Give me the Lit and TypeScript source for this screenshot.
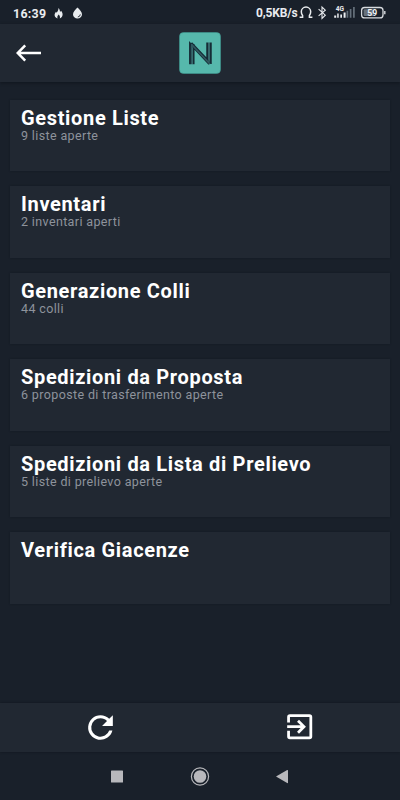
import { LitElement, html, css, svg, nothing } from "lit";
import { customElement, property } from "lit/decorators.js";

@customElement("status-bar")
class StatusBar extends LitElement {
  static styles = css`
    :host { display: flex; justify-content: space-between; height: 24px; padding: 1px 13px 0 13px; box-sizing: border-box; color: #e9ecef; font-size: 12px; font-weight: 700; }
    .side { display: flex; align-items: center; height: 24px; }
    .time { width: 41px; font-size: 12.4px; letter-spacing: 0.3px; white-space: nowrap; }
    .speed { width: 43px; font-size: 12px; letter-spacing: -0.15px; white-space: nowrap; }
    .side svg { display: block; }
    .flame { margin-right: 9px; }
    .label { font-family: Roboto, sans-serif; font-weight: 700; }
  `;
  render() {
    return html`
      <div class="side">
        <span class="time">16:39</span>
        <svg class="flame" width="9" height="12" viewBox="0 0 9 12"><path fill="#e9ecef" d="M4.6 1C5.6 2.5 6 3.8 6 5L7.1 3.8C8.4 5.5 9 7 8.4 8.8C7.9 10.3 6.8 11 5.8 11.4C6.4 9.8 5.6 8.7 4.6 7.6C3.6 8.8 3 9.9 3.5 11.4C1.6 10.8.5 9.6.6 7.8C.7 6.5 1.3 5.6 2 4.7L2.8 5.8C3.5 4.5 4.4 3 4.6 1Z"/></svg>
        <svg width="11" height="12" viewBox="0 0 11 12"><path fill="#e9ecef" d="M5.5.5C7.4 2.5 10 5 10 7.2A4.5 4.4 0 0 1 1 7.2C1 5 3.6 2.5 5.5.5Z"/><path d="M5.8 10Q8.2 9.6 8.3 7.4" fill="none" stroke="#18202a" stroke-width=".9"/></svg>
      </div>
      <div class="side">
        <span class="speed">0,5KB/s</span>
        <svg width="88" height="24" viewBox="300 1 88 24">
          <path d="M300.6 17.2H303.6V15.4C302.6 14.2 302.3 13 302.3 11.8A4.7 4.8 0 0 1 311.7 11.8C311.7 13 311.4 14.2 310.4 15.4V17.2H313.4" fill="none" stroke="#e9ecef" stroke-width="1.5"/>
          <path d="M319.6 9.2L326.3 15.2L323 18.4V7L326.3 10.2L319.6 15.8" fill="none" stroke="#e9ecef" stroke-width="1.1"/>
          <text class="label" x="336.8" y="11" font-size="6.6" fill="#e9ecef">4G</text>
          <path d="M335.2 17.8H337.2V15.5H335.2ZM338.2 17.8H339.7V13.6H338.2Z" fill="#e9ecef"/>
          <path d="M341.3 17.8H343V14.5H341.3ZM344.6 17.8H346.6V12.6H344.6Z" fill="#e9ecef"/>
          <path d="M348.4 17.8V10.8M351.6 17.8V9M354.9 17.8V7" stroke="#65707b" stroke-width="1.7"/>
          <rect x="362.6" y="7.5" width="21.4" height="10.4" rx="3" fill="none" stroke="#d7dade" stroke-width="1.3"/>
          <rect x="364.6" y="9.3" width="10.2" height="6.8" rx="1" fill="#68717b"/>
          <path d="M385.8 11.1V14.3" stroke="#d7dade" stroke-width="1.4"/>
          <text class="label" x="373.3" y="15.8" font-size="8.6" text-anchor="middle" fill="#f1f2f4">59</text>
        </svg>
      </div>`;
  }
}

@customElement("list-card")
class ListCard extends LitElement {
  @property() heading = "";
  @property() detail = "";
  static styles = css`
    :host { display: block; box-sizing: border-box; height: 71.6px; padding: 8px 11px; background: #212832; box-shadow: 0 0 2px rgba(12, 18, 25, .4); }
    .heading { color: #fff; font-size: 20px; font-weight: 700; line-height: 20px; letter-spacing: .66px; white-space: nowrap; }
    .detail { color: #8e939c; font-size: 12.5px; line-height: 15px; letter-spacing: .37px; white-space: nowrap; }
  `;
  render() {
    return html`<div class="heading">${this.heading}</div>
      ${this.detail ? html`<div class="detail">${this.detail}</div>` : nothing}`;
  }
}

const logo = svg`
  <rect x=".5" y=".5" width="41" height="41" rx="4" fill="#56b8ac" stroke="#3f9a92" stroke-width=".6"/>
  <path d="M11 32.3V11.5L30.2 32M14.6 32.3V12M28.2 10.5V27M31.8 10.5V32M12.4 10.8L31.6 31.2" fill="none" stroke="#152c36" stroke-width="1.9"/>
  <path d="M12.8 32.3V12M30 10.5V30M12.4 12.2L31 32" fill="none" stroke="#315a61" stroke-width="1.6"/>`;

@customElement("app-root")
class AppRoot extends LitElement {
  private cards = [
    { heading: "Gestione Liste", detail: "9 liste aperte" },
    { heading: "Inventari", detail: "2 inventari aperti" },
    { heading: "Generazione Colli", detail: "44 colli" },
    { heading: "Spedizioni da Proposta", detail: "6 proposte di trasferimento aperte" },
    { heading: "Spedizioni da Lista di Prelievo", detail: "5 liste di prelievo aperte" },
    { heading: "Verifica Giacenze", detail: "" },
  ];
  static styles = css`
    :host { display: flex; flex-direction: column; width: 400px; height: 800px; overflow: hidden; background: #19202a; font-family: Roboto, sans-serif; }
    svg { display: block; }
    .header { display: grid; grid-template-columns: 1fr 42px 1fr; align-items: center; height: 57.5px; flex: none; background: #212832; box-shadow: 0 1px 3px rgba(10, 15, 22, .6); }
    .back { margin-left: 16px; }
    .cards { flex: 1; display: flex; flex-direction: column; gap: 15px; padding: 18px 10px 0; }
    .actions { display: grid; grid-template-columns: 1fr 1fr; align-items: center; justify-items: center; height: 49px; flex: none; background: #212832; box-shadow: 0 0 2px rgba(10, 15, 22, .6); }
    .nav { display: block; height: 48.5px; flex: none; }
  `;
  render() {
    return html`
      <status-bar></status-bar>
      <div class="header">
        <svg class="back" width="26" height="18" viewBox="0 0 26 18"><path d="M25 9H2M9.2 1.4L1.7 9L9.2 16.6" fill="none" stroke="#fff" stroke-width="2.5"/></svg>
        <svg width="42" height="42" viewBox="0 0 42 42">${logo}</svg>
      </div>
      <div class="cards">
        ${this.cards.map((c) => html`<list-card .heading=${c.heading} .detail=${c.detail}></list-card>`)}
      </div>
      <div class="actions">
        <svg width="37" height="37" viewBox="0 0 24 24"><path fill="#fff" d="M17.65 6.35A7.96 7.96 0 0 0 12 4a8 8 0 1 0 7.73 10h-2.08A6 6 0 1 1 12 6c1.66 0 3.14.69 4.22 1.78L13 11h7V4l-2.35 2.35z"/></svg>
        <svg width="33.4" height="33.4" viewBox="0 0 24 24"><path fill="#fff" d="M10.09 15.59L11.5 17l5-5-5-5-1.41 1.41L12.67 11H3v2h9.67l-2.58 2.59zM19 3H5a2 2 0 0 0-2 2v4h2V5h14v14H5v-4H3v4a2 2 0 0 0 2 2h14a2 2 0 0 0 2-2V5a2 2 0 0 0-2-2z"/></svg>
      </div>
      <svg class="nav" width="400" height="48.5" viewBox="0 751.5 400 48.5">
        <rect x="111" y="770" width="12" height="12" rx=".6" fill="#b8b8bc"/>
        <circle cx="200" cy="776" r="8.6" fill="none" stroke="#b8b8bc" stroke-width="1.2"/>
        <circle cx="200" cy="776" r="6.3" fill="#b8b8bc"/>
        <path d="M276 776L287.2 769.5Q288 769.2 288 770V782.3Q288 783 287.2 782.6Z" fill="#b8b8bc"/>
      </svg>`;
  }
}
